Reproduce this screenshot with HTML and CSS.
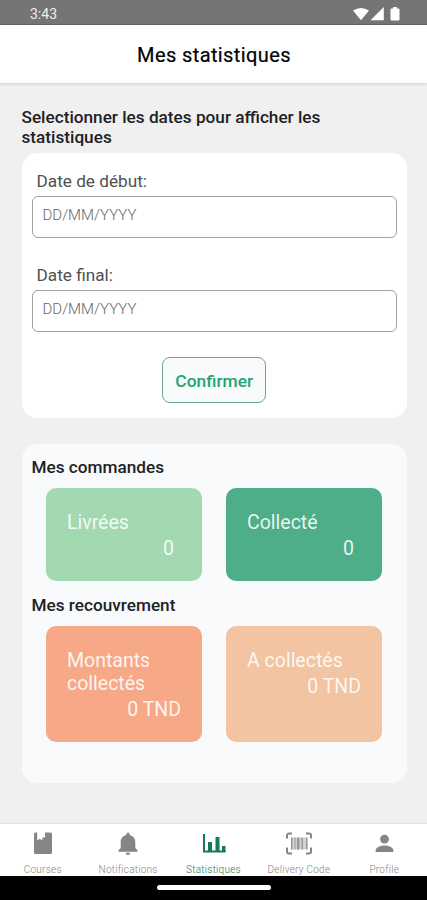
FILE: index.html
```html
<!DOCTYPE html>
<html lang="fr">
<head>
<meta charset="utf-8">
<title>Mes statistiques</title>
<link rel="stylesheet" href="styles.css">
</head>
<body>
<div class="status">
  <span class="time">3:43</span>
  <svg class="signals" width="47" height="16" viewBox="0 0 47 16" fill="#fff">
    <path d="M0 3.600Q8 -1.800 16 3.600L8 13.200Z"/>
    <path d="M30.800 0V13.300H17.500Z"/>
    <path d="M37.500 2.500a1 1 0 0 1 1-1h1.500V0h4v1.500h1.500a1 1 0 0 1 1 1v10a1 1 0 0 1-1 1h-7a1 1 0 0 1-1-1z"/>
  </svg>
</div>
<header class="header"><h1>Mes statistiques</h1></header>
<main class="content">
  <h2 class="intro">Selectionner les dates pour afficher les statistiques</h2>
  <section class="card dates">
    <label class="label">Date de début:</label>
    <div class="input">DD/MM/YYYY</div>
    <label class="label">Date final:</label>
    <div class="input">DD/MM/YYYY</div>
    <button class="confirm">Confirmer</button>
  </section>
  <section class="card stats">
    <h3>Mes commandes</h3>
    <div class="row">
      <div class="tile green-light"><span class="name">Livrées</span><span class="value count">0</span></div>
      <div class="tile green"><span class="name">Collecté</span><span class="value count">0</span></div>
    </div>
    <h3>Mes recouvrement</h3>
    <div class="row tall">
      <div class="tile coral"><span class="name">Montants collectés</span><span class="value">0 TND</span></div>
      <div class="tile peach"><span class="name">A collectés</span><span class="value">0 TND</span></div>
    </div>
  </section>
</main>
<nav class="tabs">
  <a class="tab"><svg width="28" height="28" viewBox="0 0 28 28"><path fill="currentColor" d="M6.500 2.500h1.700v8l2.500-1.700 2.600 1.700v-3h2.700V2.500h5.500a1.500 1.500 0 0 1 1.500 1.500v18.500a1.500 1.500 0 0 1-1.500 1.500h-15A1.500 1.500 0 0 1 5 22.500V4a1.500 1.500 0 0 1 1.500-1.500z"/></svg><span>Courses</span></a>
  <a class="tab"><svg width="28" height="28" viewBox="0 0 28 28"><path fill="currentColor" d="M14 25a2.300 2.300 0 0 0 2.300-2.300h-4.600A2.300 2.300 0 0 0 14 25zM21.300 18v-6c0-3.700-2.200-6.300-5.600-7.100v-.6a1.700 1.700 0 0 0-3.400 0v.6C8.900 5.700 6.700 8.300 6.700 12v6L4.500 20.300v1.400h19v-1.400z"/></svg><span>Notifications</span></a>
  <a class="tab active"><svg width="28" height="28" viewBox="0 0 28 28"><path fill="none" stroke="currentColor" stroke-width="2" d="M4 4v17.500H25.500"/><path fill="currentColor" d="M8 12h4v10H8zM15.500 7h4v15h-4zM22 16h3.500v6H22z"/></svg><span>Statistiques</span></a>
  <a class="tab"><svg width="28" height="28" viewBox="0 0 28 28"><path fill="none" stroke="currentColor" stroke-width="2" d="M2 8.500V5.500a2 2 0 0 1 2-2h3M21 3.500h3a2 2 0 0 1 2 2v3M26 17.500v4a2 2 0 0 1-2 2h-3M7 23.500H4a2 2 0 0 1-2-2v-4"/><path fill="currentColor" opacity=".35" d="M6 7.500h16.500v12H6z"/><path fill="currentColor" opacity=".75" d="M6 7.500h1.500v12H6zM9.500 7.500h1v12h-1zM12 7.500h2.500v12H12zM16.500 7.500h1.500v12h-1.500zM21 7.500h1.500v12H21z"/></svg><span>Delivery Code</span></a>
  <a class="tab"><svg width="28" height="28" viewBox="0 0 28 28"><circle fill="currentColor" cx="14.500" cy="9.200" r="4.400"/><path fill="currentColor" d="M5.700 22v-1.800c0-3 5-4.800 8.800-4.800s8.800 1.800 8.800 4.800V22z"/></svg><span>Profile</span></a>
</nav>
<div class="gesture"><div class="pill"></div></div>
</body>
</html>
```

FILE: styles.css
```css
* { box-sizing: border-box; }
body {
  margin: 0;
  width: 427px;
  height: 900px;
  overflow: hidden;
  display: flex;
  flex-direction: column;
  background: #f0f0f0;
  color: #202124;
  font-family: Roboto, "Liberation Sans", sans-serif;
}
h1, h2, h3 { margin: 0; font-weight: 500; }
.status {
  height: 25px;
  flex: none;
  display: flex;
  justify-content: space-between;
  padding: 6px 27px 0 30px;
  background: #757575;
  border-bottom: 1px solid #626262;
  color: #eee;
}
.time { font-size: 14px; line-height: 17px; }
.signals { margin-top: 1px; }
.header {
  height: 58px;
  flex: none;
  padding-left: 1px;
  background: #fff;
  box-shadow: 0 1px 3px rgba(0, 0, 0, .14);
  text-align: center;
}
.header h1 { font-size: 20px; font-weight: 400; line-height: 61px; color: #000; letter-spacing: .4px; -webkit-text-stroke: .2px #000; }
.content { flex: 1; padding: 24px 20px 0 21.500px; }
.intro { width: 320px; font-size: 17.200px; line-height: 20px; }
.card { border-radius: 15px; }
.dates {
  margin-top: 6px;
  height: 265px;
  padding: 18px 10px 0;
  background: #fff;
  display: flex;
  flex-direction: column;
}
.label { padding-left: 5px; font-size: 17.200px; line-height: 20px; color: #505050; }
.input {
  height: 42px;
  margin: 5px 0 27px;
  padding: 8px 10px;
  border: 1px solid #a0a0a0;
  border-radius: 6px;
  font-size: 15px;
  line-height: 20px;
  font-weight: 300;
  color: #666;
}
.confirm {
  align-self: center;
  width: 104px;
  height: 46px;
  margin-top: -2px;
  padding: 2px 0 0;
  border: 1px solid #6fa493;
  border-radius: 8px;
  background: #f8fafb;
  color: #1da674;
  font: 500 17.400px Roboto, sans-serif;
}
.stats { margin-top: 26px; height: 339px; padding: 13px 10px 0; background: #f9fafc; }
.stats h3 { font-size: 17.200px; line-height: 20px; }
.row { display: flex; gap: 24.500px; height: 93px; margin: 11px 14px 13.500px 14.500px; }
.row.tall { height: 116px; }
.tile {
  flex: none;
  width: 155.500px;
  padding: 23px 20.500px 0 21px;
  border-radius: 10px;
  display: flex;
  flex-direction: column;
  font-size: 19.500px;
  line-height: 23px;
  color: rgba(255, 255, 255, .88);
}
.value { align-self: flex-end; margin-top: 3px; }
.count { margin-right: 7px; }
.green-light { background: #a3d9b1; }
.green { background: #4dae89; }
.coral { background: #f7a987; }
.peach { background: #f2c4a1; }
.tabs {
  flex: none;
  display: flex;
  height: 52px;
  overflow: hidden;
  background: #fff;
  box-shadow: 0 -1px 1px #e2e2e2;
}
.tab {
  flex: 1 1 0;
  display: flex;
  flex-direction: column;
  align-items: center;
  padding-top: 6px;
  color: #858585;
  font-size: 10px;
  line-height: 12px;
  font-weight: 300;
  letter-spacing: .25px;
  white-space: nowrap;
}
.tab svg { display: block; flex: none; }
.tab span { margin-top: 6px; }
.active { color: #18795a; }
.gesture {
  flex: none;
  height: 24px;
  padding-top: 9px;
  background: #000;
}
.pill { width: 114px; height: 5px; margin: 0 auto; border-radius: 3px; background: #fff; }
```
